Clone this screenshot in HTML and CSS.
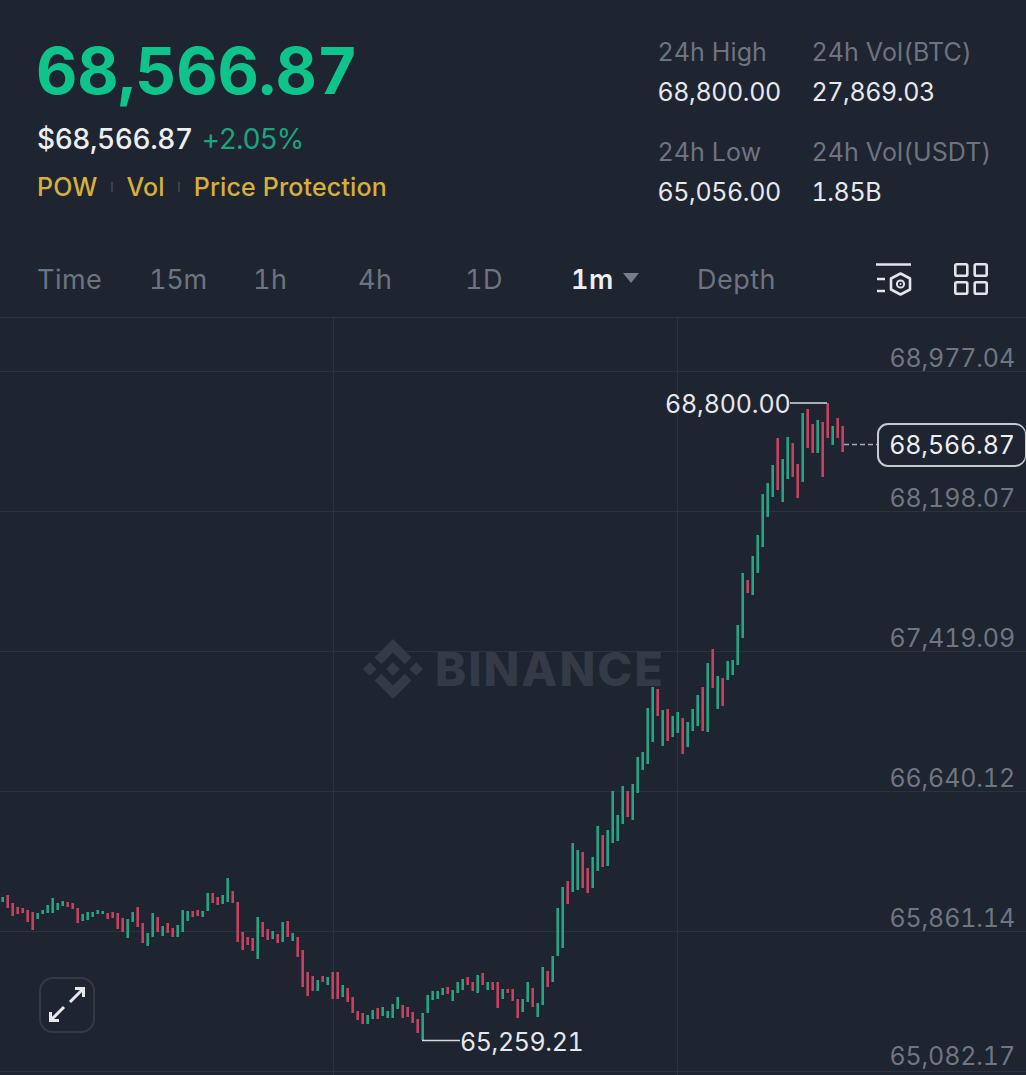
FILE: index.html
```html
<!DOCTYPE html>
<html lang="en">
<head>
<meta charset="utf-8">
<title>BTC/USDT</title>
<link rel="stylesheet" href="styles.css">
</head>
<body>
<main class="page">
  <header class="summary">
    <div class="price-block">
      <div class="last-price">68,566.87</div>
      <div class="sub-price"><span class="fiat">$68,566.87</span><span class="change">+2.05%</span></div>
      <div class="tags"><span>POW</span><i class="sep"></i><span>Vol</span><i class="sep"></i><span>Price Protection</span></div>
    </div>
    <dl class="stats">
      <div class="stat"><dt>24h High</dt><dd>68,800.00</dd></div>
      <div class="stat"><dt>24h Vol(BTC)</dt><dd>27,869.03</dd></div>
      <div class="stat"><dt>24h Low</dt><dd>65,056.00</dd></div>
      <div class="stat"><dt>24h Vol(USDT)</dt><dd>1.85B</dd></div>
    </dl>
  </header>
  <nav class="tabs">
    <span class="tab tab-time">Time</span>
    <span class="tab tab-15m">15m</span>
    <span class="tab tab-1h">1h</span>
    <span class="tab tab-4h">4h</span>
    <span class="tab tab-1d">1D</span>
    <span class="tab tab-1m">1m<i class="caret"></i></span>
    <span class="tab tab-depth">Depth</span>
    <span class="tools">
      <svg class="tool tool-a" viewBox="876 262 36 35" fill="none" stroke="#e3e5ea" stroke-width="2.6">
        <path d="M876 264.500H911M877 279H885M877 291H885"/>
        <path d="M900.500 273.500L910 278.500V289.500L900.500 294.500L891 289.500V278.500Z" stroke-linejoin="round"/>
        <circle cx="900.500" cy="284" r="3.600" stroke-width="2"/>
        <circle cx="900.500" cy="284" r="1" fill="#e3e5ea" stroke="none"/>
      </svg>
      <svg class="tool tool-b" viewBox="0 0 34 32" fill="none" stroke="#e3e5ea" stroke-width="2.600">
        <rect x="1.300" y="1.300" width="12" height="11.500" rx="1.500"/>
        <rect x="20.700" y="1.300" width="12" height="11.500" rx="1.500"/>
        <rect x="1.300" y="19.200" width="12" height="11.500" rx="1.500"/>
        <rect x="20.700" y="19.200" width="12" height="11.500" rx="1.500"/>
      </svg>
    </span>
  </nav>
  <section class="chart">
    <svg class="plot" viewBox="0 317 1026 758">
      <path class="grid" d="M0 317.500H1026M0 371.500H1026M0 511.500H1026M0 651.500H1026M0 791.500H1026M0 931.500H1026M0 1071.500H1026M333.500 317V1075M677.500 317V1075"/>
      <path class="candles-green" d="M2.700 897V902M37.700 913V919M42.700 910V914M47.700 905V913M52.700 898V913M57.700 903V910M62.700 901V906M82.700 914V921M87.700 912V920M92.700 912V917M97.700 910V914M102.700 911V914M127.700 919V938M132.700 912V922M147.700 933V946M152.700 913V937M162.700 926V936M177.700 925V937M182.700 910V932M187.700 911V921M202.700 911V917M207.700 893V911M222.700 895V904M227.700 878V902M257.700 917V959M272.700 931V939M282.700 922V942M292.700 933V941M317.700 980V991M327.700 977V985M342.700 985V997M367.700 1015V1024M372.700 1010V1019M382.700 1007V1016M387.700 1011V1018M392.700 1004V1018M397.700 997V1009M422.700 1013V1040M427.700 995V1013M432.700 991V1000M437.700 991V999M442.700 988V995M452.700 990V1001M457.700 982V993M462.700 979V990M477.700 975V993M487.700 982V990M502.700 989V999M522.700 999V1012M527.700 982V1002M537.700 1003V1017M542.700 967V1005M552.700 956V982M557.700 908V956M562.700 887V948M572.700 843V892M577.700 850V890M592.700 857V888M597.700 826V871M607.700 830V866M612.700 791V843M617.700 815V841M622.700 786V824M632.700 784V820M637.700 757V793M642.700 752V770M647.700 708V764M652.700 687V742M662.700 710V746M672.700 716V737M677.700 712V733M687.700 722V747M692.700 709V731M697.700 695V726M707.700 663V732M717.700 676V709M727.700 661V680M732.700 660V675M737.700 625V665M742.700 573V638M752.700 556V595M757.700 535V573M762.700 494V547M767.700 483V517M772.700 465V497M782.700 459V502M787.700 437V479M802.700 413V482M817.700 420V453M832.700 426V445"/>
      <path class="candles-red" d="M7.700 895V908M12.700 903V916M17.700 907V914M22.700 908V913M27.700 910V922M32.700 912V930M67.700 902V907M72.700 903V909M77.700 908V923M107.700 913V919M112.700 912V918M117.700 913V929M122.700 918V932M137.700 907V927M142.700 923V943M157.700 917V932M167.700 923V933M172.700 928V937M192.700 911V917M197.700 910V916M212.700 893V903M217.700 897V905M232.700 891V903M237.700 902V942M242.700 932V950M247.700 937V945M252.700 938V951M262.700 922V937M267.700 929V940M277.700 934V943M287.700 921V937M297.700 937V957M302.700 950V987M307.700 972V996M312.700 976V991M322.700 976V982M332.700 972V999M337.700 972V999M347.700 988V1002M352.700 997V1013M357.700 1011V1020M362.700 1013V1024M377.700 1008V1019M402.700 1005V1018M407.700 1007V1017M412.700 1012V1023M417.700 1019V1033M447.700 987V994M467.700 977V985M472.700 982V991M482.700 973V985M492.700 982V990M497.700 982V1008M507.700 989V993M512.700 989V1001M517.700 999V1018M532.700 988V1007M547.700 971V987M567.700 881V904M582.700 852V888M587.700 868V893M602.700 835V867M627.700 791V817M657.700 689V716M667.700 709V741M682.700 718V754M702.700 687V731M712.700 649V688M722.700 678V706M747.700 580V593M777.700 438V490M792.700 443V477M797.700 464V498M807.700 409V448M812.700 424V453M822.700 422V477M827.700 403V438M837.700 418V438M842.700 426V452"/>
      <path class="leader" d="M790 403H827M422 1040.500H460"/>
      <path class="dash" d="M844 444.500H877"/>
    </svg>
    <svg class="logo" viewBox="0 0 126.610 126.610">
      <path d="M38.730 53.200L63.300 28.620L87.910 53.220L102.210 38.910L63.300 0L24.420 38.900Z"/>
      <path d="M0 63.310L14.300 49.010L28.610 63.310L14.300 77.610Z"/>
      <path d="M38.730 73.410L63.300 97.990L87.910 73.400L102.230 87.700L63.300 126.610L24.420 87.720Z"/>
      <path d="M98 63.310L112.300 49L126.610 63.300L112.300 77.610Z"/>
      <path d="M77.830 63.300L63.300 48.760L48.780 63.280L63.300 77.830Z"/>
    </svg>
    <span class="wordmark">BINANCE</span>
    <span class="axis a1">68,977.04</span>
    <span class="axis a2">68,198.07</span>
    <span class="axis a3">67,419.09</span>
    <span class="axis a4">66,640.12</span>
    <span class="axis a5">65,861.14</span>
    <span class="axis a6">65,082.17</span>
    <span class="now">68,566.87</span>
    <span class="extreme high">68,800.00</span>
    <span class="extreme low">65,259.21</span>
    <button class="expand" type="button" aria-label="Expand">
      <svg viewBox="0 0 56 56" fill="none" stroke="#e6e8ec" stroke-width="3">
        <path d="M12 43L25 30M31 25L44 12"/>
        <path d="M36 11.500H44.500V20M11.500 35V43.500H20"/>
      </svg>
    </button>
  </section>
</main>
</body>
</html>
```
FILE: styles.css
```css
* { box-sizing: border-box; }
html, body { margin: 0; background: #1e2430; }
body { font-family: Inter, "Liberation Sans", sans-serif; color: #e6e8ec; overflow: hidden; font-variant-numeric: tabular-nums; }
.page { width: 1026px; height: 1075px; display: flex; flex-direction: column; }

.summary { height: 248px; display: flex; justify-content: space-between; align-items: flex-start; padding: 36px 0 0 37px; }
.price-block { display: flex; flex-direction: column; }
.last-price { font-size: 64px; line-height: 70px; font-weight: 700; color: #0ec48a; letter-spacing: -0.25px; margin-left: -1px; }
.sub-price { display: flex; gap: 9px; margin-top: 15px; font-size: 28px; line-height: 36px; }
.fiat { font-weight: 500; color: #eceef2; letter-spacing: -0.45px; }
.change { color: #1ba57e; letter-spacing: -1px; }
.tags { display: flex; align-items: center; margin-top: 13px; font-size: 25px; line-height: 34px; font-weight: 500; color: #d6b03c; letter-spacing: 0.15px; }
.sep { width: 2px; height: 10px; margin: 0 13.500px; background: #3a414d; }

.stats { margin: 0; width: 368.500px; display: grid; grid-template-columns: 154px 1fr; row-gap: 27px; }
.stat { display: flex; flex-direction: column; gap: 7px; }
.stat dt { font-size: 25px; line-height: 33px; color: #6d7480; letter-spacing: 0.1px; }
.stat dd { margin: 0; font-size: 25px; line-height: 33px; color: #e6e8ec; letter-spacing: -0.4px; }

.tabs { height: 69px; display: flex; align-items: center; position: relative; font-size: 27px; color: #6d7480; }
.tab { position: absolute; top: 15px; line-height: 34px; letter-spacing: 0.5px; }
.tab-time { left: 37px; }
.tab-15m { left: 149px; letter-spacing: -0.2px; }
.tab-1h { left: 253px; }
.tab-4h { left: 358px; }
.tab-1d { left: 465px; }
.tab-1m { left: 571px; color: #eceef2; font-weight: 600; display: flex; align-items: center; }
.tab-depth { left: 697px; }
.caret { width: 0; height: 0; margin: -5px 0 0 9px; border-left: 8.500px solid transparent; border-right: 8.500px solid transparent; border-top: 10px solid #777d87; }
.tools { position: absolute; left: 876px; top: 14px; display: flex; gap: 42px; }
.tool { display: block; }
.tool-a { width: 36px; height: 35px; }
.tool-b { width: 34px; height: 32px; margin-top: 1px; }

.chart { flex: 1; position: relative; }
.plot { position: absolute; inset: 0; width: 100%; height: 100%; }
.grid { fill: none; stroke: #2c333f; stroke-width: 1; }
.candles-green, .candles-red { fill: none; stroke-width: 2.600; }
.candles-green { stroke: #25a581; }
.candles-red { stroke: #c6425f; }
.leader { fill: none; stroke: #d8dade; stroke-width: 1.500; }
.dash { fill: none; stroke: #a6a9b0; stroke-width: 1.500; stroke-dasharray: 5 3; }

.logo { position: absolute; left: 363px; top: 322px; width: 60px; height: 60px; fill: #343a46; }
.wordmark { position: absolute; left: 435px; top: 324px; font-size: 47px; line-height: 56px; font-weight: 800; color: #343a46; letter-spacing: 1.900px; }

.axis { position: absolute; right: 11px; font-size: 25px; line-height: 30px; color: #6f7682; letter-spacing: -0.15px; }
.a1 { top: 26px; }
.a2 { top: 166px; }
.a3 { top: 306px; }
.a4 { top: 446px; }
.a5 { top: 586px; }
.a6 { top: 724px; }
.now { position: absolute; left: 877px; top: 106px; width: 149px; height: 44px; border: 2px solid #c6c9cf; border-right-width: 1px; border-radius: 11px; background: #1e2430; font-size: 25px; line-height: 41px; text-align: center; color: #eceef2; letter-spacing: -0.15px; }
.extreme { position: absolute; font-size: 25px; line-height: 30px; color: #e6e8ec; letter-spacing: -0.15px; }
.high { left: 665px; top: 72px; }
.low { left: 460px; top: 710px; letter-spacing: -0.4px; }

.expand { position: absolute; left: 39px; top: 660px; width: 56px; height: 56px; padding: 0; border: 2px solid #333a47; border-radius: 14px; background: transparent; }
.expand svg { position: absolute; left: -2px; top: -2px; width: 56px; height: 56px; display: block; }
```
